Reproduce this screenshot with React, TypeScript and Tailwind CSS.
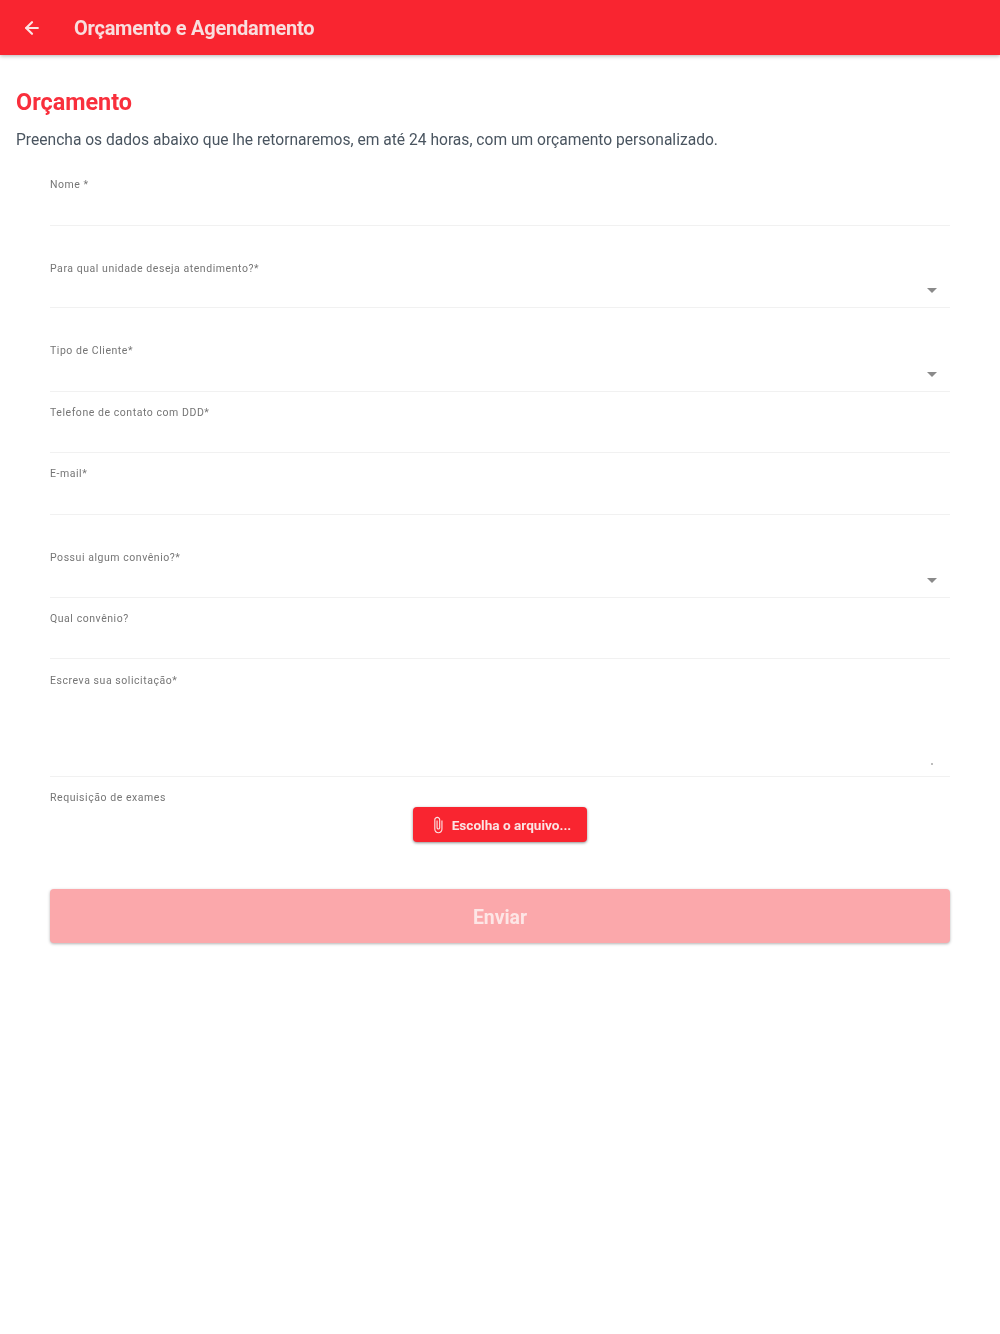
import type { ReactNode } from 'react';
import { ArrowLeft } from 'lucide-react';

type FieldProps = {
    label: string;
    select?: boolean;
    className: string;
    children?: ReactNode;
};

function Field({ label, select, className, children }: FieldProps) {
    return (
        <div className={`relative border-b border-[#f1f1f1] ${className}`}>
            <div className="pt-px text-[10.5px] leading-[14px] tracking-[0.55px] text-[#757575]">{label}</div>
            {select && (
                <div className="absolute right-[13px] bottom-[14px] h-0 w-0 border-x-[5px] border-t-[5px] border-x-transparent border-t-[#8a8a8a]" />
            )}
            {children}
        </div>
    );
}

export default function App() {
    return (
        <div className="min-h-[1334px] bg-white font-['Roboto',sans-serif] blur-[0.6px]">
            {/* Header */}
            <div className="flex h-[55px] items-center bg-[#f92530] pl-[22px] shadow-[0_1px_4px_rgba(0,0,0,0.3)]">
                <ArrowLeft size={20} strokeWidth={2.6} className="text-[#fbe4e4]" />
                <span className="ml-[32px] text-[20px] font-bold tracking-[-0.24px] text-[#f8dede]">
                    Orçamento e Agendamento
                </span>
            </div>

            <div className="px-4 pt-[33px]">
                <h1 className="text-[23.4px] leading-[28px] font-bold text-[#f92f3c]">Orçamento</h1>
                <p className="mt-[14px] text-[15.6px] leading-[20px] text-[#4a5560]">
                    Preencha os dados abaixo que lhe retornaremos, em até 24 horas, com um orçamento personalizado.
                </p>
            </div>

            {/* Form */}
            <div className="px-[50px] pt-[27px]">
                <Field label="Nome *" className="h-[49px]" />
                <Field label="Para qual unidade deseja atendimento?*" select className="mt-[35px] h-[47px]" />
                <Field label="Tipo de Cliente*" select className="mt-[35px] h-[49px]" />
                <Field label="Telefone de contato com DDD*" className="mt-[13px] h-[48px]" />
                <Field label="E-mail*" className="mt-[13px] h-[49px]" />
                <Field label="Possui algum convênio?*" select className="mt-[35px] h-[48px]" />
                <Field label="Qual convênio?" className="mt-[13px] h-[48px]" />
                <Field label="Escreva sua solicitação*" className="mt-[14px] h-[104px]">
                    {/* textarea resize handle */}
                    <div className="absolute right-[17px] bottom-[11px] h-[2px] w-[2px] bg-[#bdbdbd]" />
                </Field>

                <div className="mt-[13px] pt-px text-[10.5px] leading-[14px] tracking-[0.55px] text-[#757575]">
                    Requisição de exames
                </div>
                <div className="mt-[2px] flex justify-center">
                    <button className="flex h-[35px] w-[174px] items-center justify-center gap-[5px] rounded-[4px] bg-[#f92530] pt-px text-[13.6px] font-bold text-[#fbe4e4] shadow-[0_1px_3px_rgba(0,0,0,0.45)]">
                        <svg width="18" height="18" viewBox="0 0 24 24" fill="currentColor">
                            <path d="M16.5 6v11.5c0 2.21-1.79 4-4 4s-4-1.79-4-4V5c0-1.38 1.12-2.5 2.5-2.5s2.5 1.12 2.5 2.5v10.5c0 .55-.45 1-1 1s-1-.45-1-1V6H10v9.5c0 1.38 1.12 2.5 2.5 2.5s2.5-1.12 2.5-2.5V5c0-2.21-1.79-4-4-4S7 2.79 7 5v12.5c0 3.04 2.46 5.5 5.5 5.5s5.5-2.46 5.5-5.5V6h-1.5z" />
                        </svg>
                        Escolha o arquivo...
                    </button>
                </div>
                <button className="mt-[47px] h-[54px] w-full rounded-[4px] bg-[#fba8ab] pt-[3px] text-[19.4px] font-bold text-[#fde6e6] shadow-[0_1px_3px_rgba(0,0,0,0.3)]">
                    Enviar
                </button>
            </div>
        </div>
    );
}
